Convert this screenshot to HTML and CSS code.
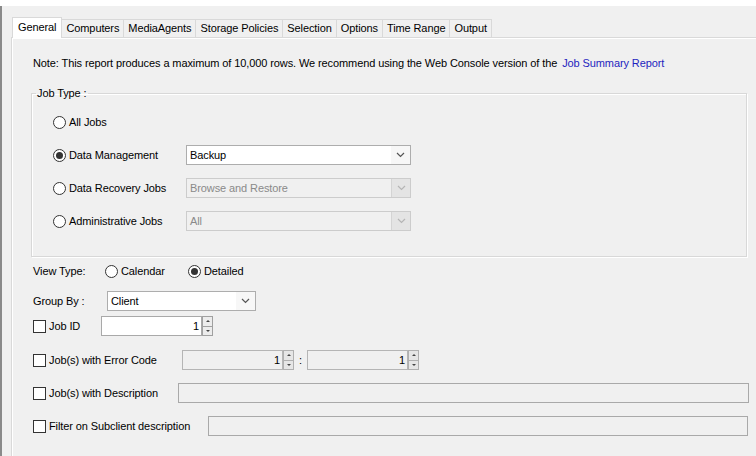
FILE: index.html
```html
<!DOCTYPE html>
<html>
<head>
<meta charset="utf-8">
<title>Job Summary Report</title>
<link rel="stylesheet" href="styles.css">
</head>
<body>
<div class="top"></div>
<div class="win">
  <div class="tabs">
    <div class="tab active">General</div>
    <div class="tab">Computers</div>
    <div class="tab">MediaAgents</div>
    <div class="tab">Storage Policies</div>
    <div class="tab">Selection</div>
    <div class="tab">Options</div>
    <div class="tab">Time Range</div>
    <div class="tab">Output</div>
  </div>
  <div class="panel">
    <div class="note">Note: This report produces a maximum of 10,000 rows. We recommend using the Web Console version of the <span class="link">Job Summary Report</span></div>

    <fieldset class="group">
      <legend>Job Type :</legend>
      <div class="jrows">
        <div class="jrow">
          <div class="opt"><span class="radio"></span><span>All Jobs</span></div>
        </div>
        <div class="jrow">
          <div class="opt"><span class="radio on"></span><span>Data Management</span></div>
          <div class="combo"><span class="val">Backup</span><span class="btn"><svg width="9" height="6" viewBox="0 0 9 6"><path d="M1 1 L4.5 4.5 L8 1" fill="none" stroke="#555" stroke-width="1.2"/></svg></span></div>
        </div>
        <div class="jrow">
          <div class="opt"><span class="radio"></span><span>Data Recovery Jobs</span></div>
          <div class="combo dis"><span class="val">Browse and Restore</span><span class="btn"><svg width="9" height="6" viewBox="0 0 9 6"><path d="M1 1 L4.5 4.5 L8 1" fill="none" stroke="#b5b5b5" stroke-width="1.2"/></svg></span></div>
        </div>
        <div class="jrow">
          <div class="opt"><span class="radio"></span><span>Administrative Jobs</span></div>
          <div class="combo dis"><span class="val">All</span><span class="btn"><svg width="9" height="6" viewBox="0 0 9 6"><path d="M1 1 L4.5 4.5 L8 1" fill="none" stroke="#b5b5b5" stroke-width="1.2"/></svg></span></div>
        </div>
      </div>
    </fieldset>

    <div class="row view">
      <span class="lbl-view">View Type:</span>
      <div class="opt cal"><span class="radio"></span><span>Calendar</span></div>
      <div class="opt"><span class="radio on"></span><span>Detailed</span></div>
    </div>

    <div class="row groupby">
      <span class="lbl-group">Group By :</span>
      <div class="combo small"><span class="val">Client</span><span class="btn"><svg width="9" height="6" viewBox="0 0 9 6"><path d="M1 1 L4.5 4.5 L8 1" fill="none" stroke="#555" stroke-width="1.2"/></svg></span></div>
    </div>

    <div class="row jobid">
      <div class="chk lbl-jobid"><span class="box"></span><span>Job ID</span></div>
      <div class="spin w101"><span class="num">1</span></div>
      <div class="spinbtns"><span class="up"></span><span class="dn"></span></div>
    </div>

    <div class="row err">
      <div class="chk lbl-err"><span class="box"></span><span>Job(s) with Error Code</span></div>
      <div class="spin dis w101"><span class="num">1</span></div>
      <div class="spinbtns dis"><span class="up"></span><span class="dn"></span></div>
      <span class="colon">:</span>
      <div class="spin dis w101"><span class="num">1</span></div>
      <div class="spinbtns dis"><span class="up"></span><span class="dn"></span></div>
    </div>

    <div class="row desc">
      <div class="chk lbl-desc"><span class="box"></span><span>Job(s) with Description</span></div>
      <div class="field"></div>
    </div>

    <div class="row filter">
      <div class="chk lbl-filter"><span class="box"></span><span>Filter on Subclient description</span></div>
      <div class="field"></div>
    </div>
  </div>
</div>
</body>
</html>
```

FILE: styles.css
```css
* { box-sizing: border-box; }
html, body { margin: 0; padding: 0; }
body {
  width: 756px;
  height: 456px;
  overflow: hidden;
  background: #f0f0f0;
  font-family: "Liberation Sans", Arial, sans-serif;
  font-size: 11px;
  letter-spacing: -0.1px;
  color: #000;
}
.top { height: 6px; background: #fff; }
.win {
  height: 450px;
  border-left: 2px solid #8a8a8a;
  padding-left: 9px;
}
.tabs {
  display: flex;
  align-items: flex-end;
  height: 31px;
  padding-left: 1px;
  position: relative;
  z-index: 1;
}
.tab {
  height: 18px;
  line-height: 16px;
  padding: 0 4px;
  border: 1px solid #d9d9d9;
  border-bottom: none;
  margin-right: -1px;
  background: #f0f0f0;
  white-space: nowrap;
}
.tab.active {
  height: 21px;
  line-height: 19px;
  padding: 0 5px;
  margin-bottom: -1px;
  background: #fff;
  position: relative;
}
.panel {
  height: 419px;
  border-top: 1px solid #d9d9d9;
  border-left: 1px solid #d9d9d9;
  box-shadow: inset 1px 1px 0 #fff;
  padding-left: 21px;
}
.note {
  margin-top: 18px;
  line-height: 14px;
  white-space: nowrap;
}
.link { color: #1f1fbf; margin-left: 2px; }

.group {
  margin: 16px 0 0 -2px;
  width: 716px;
  padding: 12px 0 25px 4px;
  border: 1px solid #d8d8d8;
  box-shadow: inset 1px 1px 0 #fff, 1px 1px 0 #fff;
  min-width: 0;
}
.group legend {
  padding: 0 1px;
  line-height: 14px;
}
.jrows {
  display: flex;
  flex-direction: column;
  gap: 13px;
  padding-left: 17px;
}
.jrow {
  display: flex;
  align-items: center;
  height: 20px;
}
.jrow .opt { width: 133px; }
.opt {
  display: flex;
  align-items: center;
  gap: 3px;
  line-height: 14px;
  white-space: nowrap;
}
.radio {
  width: 13px;
  height: 13px;
  border: 1px solid #333;
  border-radius: 50%;
  background: #fff;
  display: inline-flex;
  align-items: center;
  justify-content: center;
  flex: none;
}
.radio.on::after {
  content: "";
  width: 7px;
  height: 7px;
  border-radius: 50%;
  background: #333;
}
.combo {
  width: 225px;
  height: 20px;
  border: 1px solid #adadad;
  background: #fff;
  display: flex;
  align-items: stretch;
}
.combo .val {
  flex: 1;
  padding-left: 3px;
  line-height: 18px;
}
.combo .btn {
  width: 19px;
  display: flex;
  align-items: center;
  justify-content: center;
  background: #f7f7f7;
}
.combo.dis {
  background: #f0f0f0;
  border-color: #cccccc;
  color: #8a8a8a;
}
.combo.dis .btn {
  background: #e4e4e4;
  border-left: 1px solid #d4d4d4;
}
.combo.small { width: 149px; }

.row {
  display: flex;
  align-items: center;
  white-space: nowrap;
}
.view { margin-top: 7px; height: 14px; }
.lbl-view { width: 72px; }
.cal { width: 83px; }
.groupby { margin-top: 13px; height: 20px; }
.lbl-group { width: 74px; }
.jobid { margin-top: 5px; height: 20px; }
.err { margin-top: 14px; height: 20px; }
.desc { margin-top: 13px; height: 20px; }
.filter { margin-top: 13px; height: 20px; }

.chk {
  display: flex;
  align-items: center;
  gap: 3px;
  line-height: 14px;
}
.box {
  width: 13px;
  height: 13px;
  border: 1px solid #333;
  background: #fff;
  flex: none;
}
.lbl-jobid { width: 68px; }
.lbl-err { width: 149px; }
.lbl-desc { width: 145px; }
.lbl-filter { width: 175px; }

.spin {
  height: 20px;
  border: 1px solid #a9a9a9;
  background: #fff;
  display: flex;
  align-items: center;
  justify-content: flex-end;
  padding-right: 2px;
}
.w101 { width: 101px; }
.spin.dis { background: #f0f0f0; border-color: #b5b5b5; }
.spinbtns {
  width: 11px;
  height: 20px;
  display: flex;
  flex-direction: column;
}
.spinbtns span {
  flex: 1;
  border: 1px solid #a0a0a0;
  background: #ececec;
  display: flex;
  align-items: center;
  justify-content: center;
}
.spinbtns span + span { border-top: none; }
.spinbtns .up::after {
  content: "";
  border-left: 2px solid transparent;
  border-right: 2px solid transparent;
  border-bottom: 2px solid #444;
}
.spinbtns .dn::after {
  content: "";
  border-left: 2px solid transparent;
  border-right: 2px solid transparent;
  border-top: 2px solid #444;
}
.spinbtns.dis span { background: #e6e6e6; border-color: #b0b0b0; }
.colon { width: 13px; text-align: center; }
.field {
  width: 571px;
  height: 20px;
  border: 1px solid #a9a9a9;
  background: #f0f0f0;
}
.filter .field { width: 540px; }
```
